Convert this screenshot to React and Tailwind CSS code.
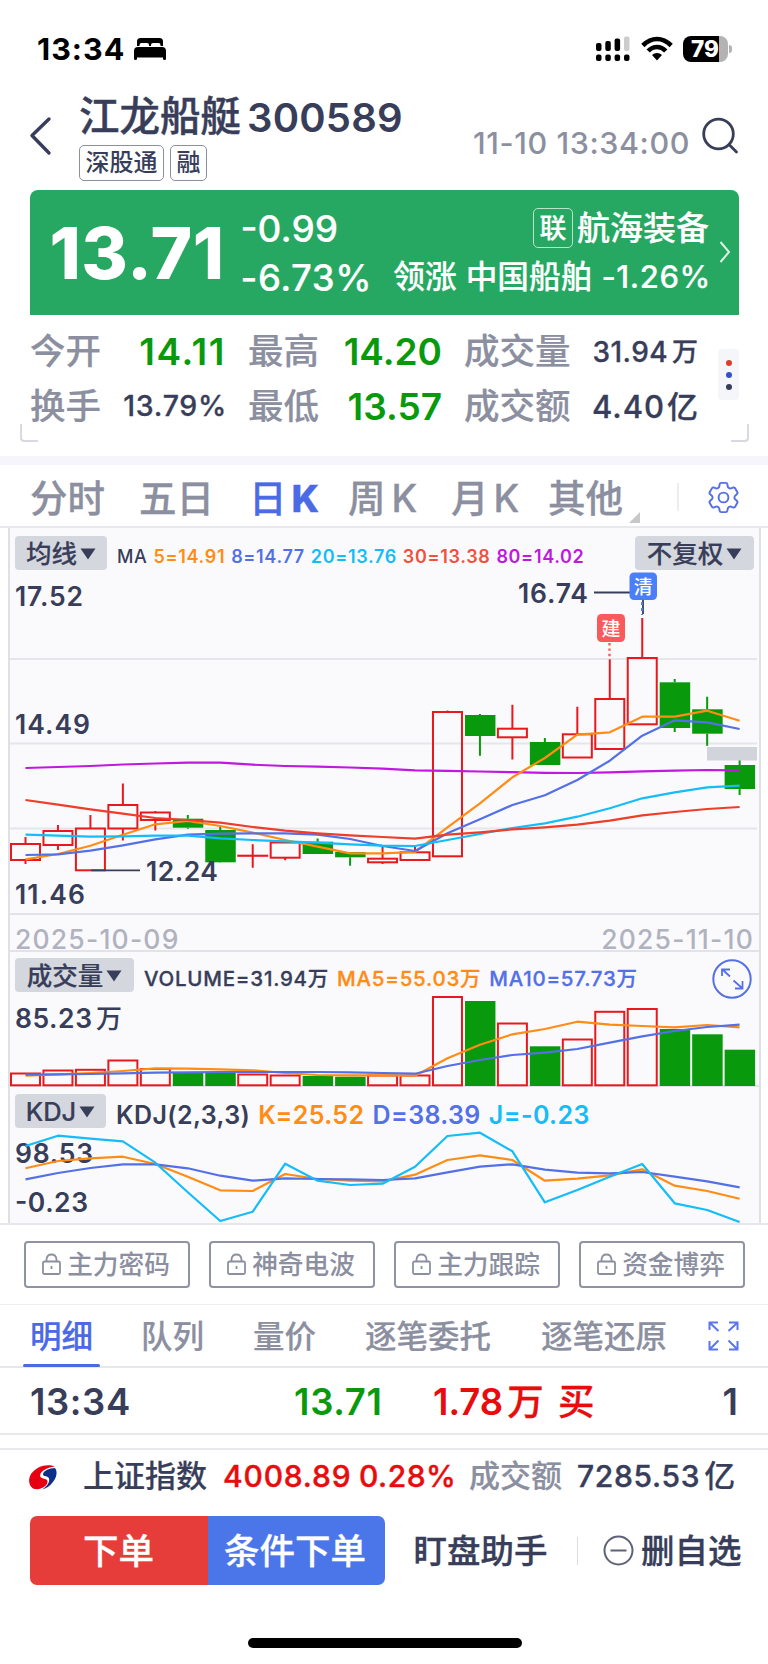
import { HiOutlineCog6Tooth } from 'react-icons/hi2';

const RED = '#e9181c';
const GREEN = '#089a0c';
const ORANGE = '#ff8c14';
const BLUE = '#5470e6';
const CYAN = '#14bdf7';
const INK = '#383e59';

const FIRST_X = 25.5;
const STEP = 32.46;
const cx = (i) => FIRST_X + i * STEP;

// open/close edges and wick edges, in panel pixels
const candles = [
  { up: true, top: 844, bottom: 860, high: 837, low: 864 },
  { up: true, top: 831, bottom: 845, high: 825, low: 850 },
  { up: true, top: 828.5, bottom: 870.3, high: 815, low: 870 },
  { up: true, top: 805, bottom: 828.5, high: 783.5, low: 840.5 },
  { up: true, top: 812.5, bottom: 820, high: 811, low: 830.5 },
  { up: false, top: 818.7, bottom: 827.7, high: 815, low: 828.7 },
  { up: false, top: 830, bottom: 862.3, high: 827, low: 862 },
  { up: true, top: 855.7, bottom: 855.8, high: 844.3, low: 867.7 },
  { up: true, top: 842.5, bottom: 857.7, high: 842, low: 860.3 },
  { up: false, top: 841.7, bottom: 854, high: 838.5, low: 854 },
  { up: false, top: 852, bottom: 857.3, high: 852, low: 865.7 },
  { up: true, top: 858.7, bottom: 862.3, high: 846.7, low: 864 },
  { up: true, top: 852.3, bottom: 860, high: 846.7, low: 860 },
  { up: true, top: 712, bottom: 856.3, high: 710.5, low: 856 },
  { up: false, top: 715, bottom: 736, high: 714, low: 755.7 },
  { up: true, top: 728.7, bottom: 737.3, high: 704.7, low: 759.5 },
  { up: false, top: 742, bottom: 765, high: 738, low: 765 },
  { up: true, top: 734.3, bottom: 757.5, high: 706.7, low: 757 },
  { up: true, top: 699, bottom: 749, high: 659.3, low: 749 },
  { up: true, top: 658, bottom: 724.3, high: 618, low: 724 },
  { up: false, top: 682.3, bottom: 728, high: 679, low: 732 },
  { up: false, top: 709.3, bottom: 733.7, high: 696.7, low: 745.7 },
  { up: false, top: 765, bottom: 789, high: 759.3, low: 795 },
];

const priceLines = [
  {
    color: '#c018de',
    values: [768, 767, 766, 764.5, 763.5, 762.7, 762.7, 764.7, 766, 766.7, 767.5, 768.7, 770.3, 770.8, 771.5, 772.2, 772.9, 773, 772.3, 771.3, 770.7, 770, 770.3],
  },
  {
    color: ORANGE,
    values: [859.3, 854, 845.7, 834.7, 824.3, 821, 826, 832.7, 840, 846.7, 853.3, 853.3, 852, 827.3, 803.3, 777.3, 758, 734.7, 732.3, 716.7, 716.7, 710.7, 720.7],
  },
  {
    color: BLUE,
    values: [855, 854.3, 850.7, 845.3, 839.3, 834.7, 833.7, 833.3, 833.3, 834.7, 839, 846, 851, 833.3, 819.3, 805, 795.3, 780, 760.7, 735.7, 720.3, 722.3, 729],
  },
  {
    color: CYAN,
    values: [834.7, 835.7, 836.7, 836.3, 835.7, 835.7, 838.3, 840, 841.3, 842.7, 844.3, 845.7, 846, 840, 834, 828, 823.3, 816.7, 808.3, 798.3, 792.3, 787.3, 785.7],
  },
  {
    color: '#ee3d2a',
    values: [800, 804.7, 809.3, 813.7, 818, 820, 822.7, 827, 830.7, 833.3, 835.3, 837, 838.7, 834.7, 832.3, 829.3, 827.3, 824.7, 820.7, 815.3, 812, 809, 807],
  },
];

const volumes = [1073.5, 1070.5, 1069.8, 1060.5, 1069, 1073, 1073, 1074.5, 1075.5, 1076, 1076.7, 1075.5, 1075.5, 997, 1001, 1023.5, 1046.3, 1039.5, 1011.8, 1009, 1029, 1034.3, 1049.7];

const volumeLines = [
  {
    color: ORANGE,
    values: [1075.7, 1074.3, 1073, 1071, 1068.3, 1068.7, 1069.3, 1070.3, 1073, 1075, 1075.3, 1075.3, 1075.7, 1058.3, 1044.7, 1034.3, 1029, 1021.7, 1024.7, 1026, 1027.3, 1025, 1027.3],
  },
  {
    color: BLUE,
    values: [1074.7, 1074.3, 1074, 1073.3, 1072.7, 1072.3, 1072, 1072, 1072, 1072, 1072.3, 1073, 1073.7, 1066, 1060, 1055, 1052.7, 1049, 1042.7, 1036.3, 1031, 1027, 1024.7],
  },
];

const kdjLines = [
  {
    color: ORANGE,
    values: [1168.3, 1161, 1158.3, 1156.7, 1164, 1176.7, 1190.3, 1191, 1174, 1179, 1180.7, 1181.3, 1174.7, 1160, 1155.3, 1160, 1180.7, 1178.7, 1175.3, 1169.3, 1185.7, 1191, 1198.7],
  },
  {
    color: BLUE,
    values: [1179.3, 1173, 1168, 1164.3, 1164.3, 1168.3, 1175.7, 1180.7, 1178.3, 1179, 1179.3, 1180, 1178.3, 1172.3, 1166.7, 1164.3, 1169.7, 1172.7, 1173.3, 1172, 1176.7, 1181.3, 1187.3],
  },
  {
    color: CYAN,
    values: [1146, 1135.7, 1138.7, 1141.3, 1162.7, 1192.3, 1221, 1211.7, 1163.7, 1180.7, 1185, 1183.7, 1166.7, 1136, 1132.7, 1151.3, 1202.3, 1190, 1176.7, 1164, 1203.3, 1210, 1222],
  },
];

function Lines({ lines }) {
  return lines.map((line, n) => (
    <polyline
      key={n}
      fill="none"
      stroke={line.color}
      strokeWidth="2.2"
      strokeLinejoin="round"
      points={line.values.map((y, i) => `${cx(i)},${y}`).join(' ')}
    />
  ));
}

function Label({ x, y, w, children }) {
  return (
    <text x={x} y={y} fontSize="26.5" fill={INK} fontWeight="600" textLength={w}>
      {children}
    </text>
  );
}

function Dropdown({ className, children }) {
  return (
    <button className={`flex h-[34px] shrink-0 items-center justify-center gap-[3px] rounded bg-[#d5d7de] pt-[1px] text-[25.5px] leading-none font-medium [-webkit-text-stroke:0.2px] ${className}`}>
      {children}
      <svg width="16" height="12" viewBox="0 0 16 12" fill={INK}>
        <path d="M0.5 0.5h15L8 11.5z" />
      </svg>
    </button>
  );
}

function PricePanel() {
  return (
    <section className="relative h-[387px] border-b-2 border-[#e2e3e8] text-[#383e59]">
      <svg className="absolute top-0 -left-[10px]" width="768" height="387" viewBox="0 528 768 387">
        <path d="M10 659H757M10 743.5H757M10 828.5H757" stroke="#e5e6ea" strokeWidth="2" />
        {candles.map((c, i) => (
          <g key={i} stroke={c.up ? RED : GREEN} strokeWidth="2" fill={c.up ? 'none' : GREEN}>
            <path d={`M${cx(i)} ${c.high}V${c.top}M${cx(i)} ${c.bottom}V${c.low}`} />
            {c.up ? (
              <rect x={cx(i) - 14.5} y={c.top} width="29" height={c.bottom - c.top} />
            ) : (
              <rect x={cx(i) - 15} y={c.top} width="30.5" height={c.bottom - c.top} stroke="none" />
            )}
          </g>
        ))}
        <rect x="707" y="747" width="50" height="13.5" fill="#d2d4dc" />
        <Lines lines={priceLines} />
        <path d="M91 870.3H140M594 592.5H630M643 600V614" stroke={INK} strokeWidth="1.8" />
        <path d="M642 602V615" stroke="#4c7ff5" strokeWidth="2" strokeDasharray="3 3" />
        <path d="M609.5 643V659" stroke="#fb5a5c" strokeWidth="2.4" strokeDasharray="2.4 3" />
        <rect x="629.5" y="572.5" width="27.5" height="27.5" rx="4.5" fill="#4b7ff8" />
        <rect x="597" y="614" width="28" height="28" rx="4.5" fill="#fb5a5c" />
        <text x="643.3" y="593.5" fontSize="19" fontWeight="500" fill="#fff" textAnchor="middle">清</text>
        <text x="611" y="635.5" fontSize="19" fontWeight="500" fill="#fff" textAnchor="middle">建</text>
        <Label x={15} y={606} w={68}>17.52</Label>
        <Label x={15} y={734} w={75}>14.49</Label>
        <Label x={15} y={903.5} w={70}>11.46</Label>
        <Label x={146} y={880.5} w={72}>12.24</Label>
        <Label x={518} y={603} w={70}>16.74</Label>
      </svg>
      <div className="relative flex items-center pt-2 pl-[5px]">
        <Dropdown className="w-[92px]">均线</Dropdown>
        <div className="ml-[10px] flex gap-[6px] pt-[7px] text-[18px] leading-none font-semibold tracking-[0.65px]">
          <span className="font-medium">MA</span>
          <span className="text-[#ff8c14]">5=14.91</span>
          <span className="text-[#5470e6]">8=14.77</span>
          <span className="text-[#14bdf7]">20=13.76</span>
          <span className="text-[#f0503c]">30=13.38</span>
          <span className="text-[#c018de]">80=14.02</span>
        </div>
        <Dropdown className="mr-[5px] ml-auto w-[119px]">不复权</Dropdown>
      </div>
    </section>
  );
}

function VolumePanel() {
  return (
    <section className="relative h-[135px] border-b-2 border-[#e2e3e8] text-[#383e59]">
      <svg className="absolute top-0 -left-[10px]" width="768" height="135" viewBox="0 952 768 135">
        {volumes.map((top, i) =>
          candles[i].up ? (
            <rect key={i} x={cx(i) - 14.5} y={top} width="29" height={1085.3 - top} fill="none" stroke={RED} strokeWidth="2" />
          ) : (
            <rect key={i} x={cx(i) - 15} y={top} width="30.5" height={1086 - top} fill={GREEN} />
          )
        )}
        <Lines lines={volumeLines} />
        <Label x={15} y={1027.5} w={77}>85.23</Label>
        <text x="96" y="1027.5" fontSize="26" fill={INK} fontWeight="500">万</text>
      </svg>
      <div className="relative flex items-center pt-[6px] pl-[5px]">
        <Dropdown className="w-[119px]">成交量</Dropdown>
        <div className="ml-[10px] flex gap-[8px] pt-[8px] text-[20.5px] leading-none font-medium tracking-[0.75px] [-webkit-text-stroke:0.3px]">
          <span>VOLUME=31.94万</span>
          <span className="text-[#ff8c14]">MA5=55.03万</span>
          <span className="text-[#5470e6]">MA10=57.73万</span>
        </div>
      </div>
      <svg className="absolute top-[7px] right-[7px]" width="40" height="40" viewBox="0 0 40 40" fill="none" stroke={BLUE} strokeWidth="2">
        <circle cx="20" cy="20" r="18.7" />
        <path d="M10 17V10.5H18M11 11L18 17.5M30.5 22V29.5H23M29.5 28.5L21.5 21.5" strokeWidth="1.8" />
      </svg>
    </section>
  );
}

function KdjPanel() {
  return (
    <section className="relative h-[136px] text-[#383e59]">
      <svg className="absolute top-0 -left-[10px]" width="768" height="136" viewBox="0 1087 768 136">
        <Label x={15} y={1163} w={78}>98.53</Label>
        <Label x={15} y={1212} w={73}>-0.23</Label>
        <Lines lines={kdjLines} />
      </svg>
      <div className="relative flex items-center pt-[7px] pl-[5px]">
        <Dropdown className="w-[91px]">KDJ</Dropdown>
        <div className="ml-[10px] flex gap-[8px] pt-[8px] text-[25px] leading-none font-semibold tracking-[0.4px]">
          <span>KDJ(2,3,3)</span>
          <span className="text-[#ff8c14]">K=25.52</span>
          <span className="text-[#5470e6]">D=38.39</span>
          <span className="text-[#14bdf7]">J=-0.23</span>
        </div>
      </div>
    </section>
  );
}

function StatusBar() {
  return (
    <div className="flex h-[98px] items-center pr-[36px] pl-[37px] text-black">
      <span className="text-[30.5px] leading-none font-bold tracking-[1px]">13:34</span>
      <svg className="ml-[8px]" width="34" height="24" viewBox="0 0 34 24">
        <path d="M4 9V4.500Q4 1 7.500 1H26.500Q30 1 30 4.500V9H27.500V8Q27.500 6 25.500 6H20Q18 6 18 8V9H16V8Q16 6 14 6H8.500Q6.500 6 6.500 8V9Z" />
        <path d="M1 22V14Q1 10 5 10H29Q33 10 33 14V22Q33 23 31.500 23T30 22V20.500H4V22Q4 23 2.500 23T1 22Z" />
      </svg>
      <svg className="ml-auto" width="34" height="26" viewBox="0 0 34 26">
        <rect x="0" y="7" width="5.500" height="8" rx="2" />
        <rect x="9.300" y="5" width="5.500" height="10" rx="2" />
        <rect x="18.600" y="2.500" width="5.500" height="12.500" rx="2" />
        <rect x="28" y="0.500" width="5.500" height="14.500" rx="2" fill="#ccc" />
        <rect x="0" y="18.500" width="5.500" height="6.500" rx="2" />
        <rect x="9.300" y="18.500" width="5.500" height="6.500" rx="2" />
        <rect x="18.600" y="18.500" width="5.500" height="6.500" rx="2" />
        <rect x="28" y="18.500" width="5.500" height="6.500" rx="2" />
      </svg>
      <svg className="mb-[2px] ml-[11px]" width="32" height="25" viewBox="0 0 32 25" fill="none" stroke="#000" strokeWidth="4.600">
        <path d="M1.800 9.500Q8.500 3 16 3T30.200 9.500" />
        <path d="M7.200 15Q11 11 16 11T24.800 15" />
        <path d="M16 24.500L11 19Q13 17 16 17T21 19Z" fill="#000" stroke="none" />
      </svg>
      <div className="relative ml-[10px] flex h-[26px] w-[45px] items-center justify-center overflow-hidden rounded-[8px] bg-linear-to-r from-black from-80% to-[#b3b3b3] to-80% pr-[1px] text-[22.500px] leading-none font-extrabold text-white">
        79
      </div>
      <div className="ml-[1px] h-[8px] w-[3px] rounded-r-full bg-[#b3b3b3]" />
    </div>
  );
}

function Header() {
  return (
    <header className="flex h-[92px] pl-[28px]">
      <svg className="mt-[18px]" width="24" height="40" viewBox="0 0 24 40" fill="none" stroke={INK} strokeWidth="3.400" strokeLinecap="round" strokeLinejoin="round">
        <path d="M21 3L4 19.500L21 37" />
      </svg>
      <div className="ml-[27px]">
        <h1 className="flex h-[38px] items-center gap-[6px] pt-[1px] text-[40px] leading-none font-semibold tracking-[0.200px] whitespace-nowrap">
          <span className="text-[40.500px] font-medium tracking-normal [-webkit-text-stroke:0.400px]">江龙船艇</span>
          <span>300589</span>
        </h1>
        <div className="mt-[9px] flex gap-[6px] text-[24px] leading-none font-medium">
          <span className="flex h-9 w-[85px] items-center justify-center rounded-[5px] border-[1.500px] border-[#8b8fa3]">深股通</span>
          <span className="flex h-9 w-[37px] items-center justify-center rounded-[5px] border-[1.500px] border-[#8b8fa3]">融</span>
        </div>
      </div>
      <span className="mt-[30px] ml-auto text-[30.500px] leading-none font-medium tracking-[0.600px] text-[#8b8fa0]">11-10 13:34:00</span>
      <svg className="mt-[19px] mr-[27px] ml-[11px]" width="40" height="40" viewBox="0 0 40 40" fill="none" stroke={INK} strokeWidth="2.800" strokeLinecap="round">
        <circle cx="17.500" cy="17" r="14.800" />
        <path d="M28 27.500L35.500 35" />
      </svg>
    </header>
  );
}

function Quote() {
  return (
    <section className="mr-[29px] ml-[29.500px] flex h-[125px] rounded-t-lg bg-[#27a862] text-white">
      <span className="mt-[28px] ml-[20px] w-[191px] text-[71px] leading-none font-extrabold tracking-[0.500px]">13.71</span>
      <div className="flex flex-col pt-[20px] text-[37px] leading-none font-medium [-webkit-text-stroke:0.200px]">
        <span>-0.99</span>
        <span className="mt-[13px] text-[36.500px] tracking-[0.500px]">-6.73%</span>
      </div>
      <div className="ml-auto flex flex-col items-end [-webkit-text-stroke:0.200px]">
        <div className="mt-[18px] flex h-10 items-center gap-1 text-[33px] leading-none font-medium">
          <span className="flex h-10 w-[40px] items-center justify-center rounded-[5px] border-[1.500px] border-[#b9e3cb] text-[27px]">联</span>
          <span>航海装备</span>
        </div>
        <div className="-mr-[2px] mt-[13px] flex items-center gap-[9px] text-[31.700px] leading-none font-medium">
          <span>领涨</span>
          <span>中国船舶</span>
          <span className="text-[31px] tracking-[0.600px]">-1.26%</span>
        </div>
      </div>
      <svg className="mt-[50px] mr-[8px] ml-[10px]" width="12" height="24" viewBox="0 0 12 24" fill="none" stroke="#d9f2e4" strokeWidth="2">
        <path d="M1.500 2L10 12L1.500 22" />
      </svg>
    </section>
  );
}

function Stats() {
  const label = 'text-[35.500px] text-[#8b8fa0] [-webkit-text-stroke:0.200px]';
  const price = 'pr-[22px] text-right text-[37px] font-semibold text-[#089a0c]';
  return (
    <section className="relative h-[141px] pt-[9px] leading-none font-medium">
      <div className="grid grid-cols-[70px_148px_70px_146px_105px_129px] grid-rows-[55px_55px] items-center pl-[30px] whitespace-nowrap">
        <span className={label}>今开</span>
        <span className={`${price} tracking-[1.600px]`}>14.11</span>
        <span className={label}>最高</span>
        <span className={price}>14.20</span>
        <span className={label}>成交量</span>
        <span className="flex items-center justify-end gap-[4px] text-[28px] tracking-[0.400px] [-webkit-text-stroke:0.300px]">
          31.94<span className="text-[26px] tracking-normal">万</span>
        </span>
        <span className={label}>换手</span>
        <span className="pr-[21px] text-right text-[28.500px] tracking-[0.700px] [-webkit-text-stroke:0.300px]">13.79%</span>
        <span className={label}>最低</span>
        <span className={price}>13.57</span>
        <span className={label}>成交额</span>
        <span className="flex items-center justify-end gap-[2px] text-[31px] tracking-[1px] [-webkit-text-stroke:0.300px]">
          4.40<span className="text-[31px] tracking-normal">亿</span>
        </span>
      </div>
      <div className="absolute top-[34px] right-[29px] flex h-[51px] w-[21px] flex-col items-center justify-center gap-[6px] rounded bg-[#f5f6f9]">
        <i className="size-[6px] rounded-full bg-[#d8402c]" />
        <i className="size-[6px] rounded-full bg-[#3550c8]" />
        <i className="size-[6px] rounded-full bg-[#383e59]" />
      </div>
      <i className="absolute top-[109px] left-[20px] h-[18px] w-[18px] rounded-bl-sm border-b-2 border-l-2 border-[#d8d9e1]" />
      <i className="absolute top-[109px] right-[19px] h-[18px] w-[18px] rounded-br-sm border-r-2 border-b-2 border-[#d8d9e1]" />
    </section>
  );
}

function PeriodTabs() {
  return (
    <nav className="relative flex h-[63px] items-center border-b-2 border-[#e8e8ed] pt-[6px] pl-[30px] text-[37.500px] leading-none font-medium whitespace-nowrap text-[#8b8fa0] [-webkit-text-stroke:0.300px]">
      <span className="w-[109px]">分时</span>
      <span className="w-[110px]">五日</span>
      <span className="w-[99px] text-[#4b6ae6]">日<b className="ml-[5px] font-extrabold">K</b></span>
      <span className="w-[103px]">周<span className="ml-[6px]">K</span></span>
      <span className="w-[97px]">月<span className="ml-[5px]">K</span></span>
      <span>其他</span>
      <svg className="mt-[37px] ml-[6px]" width="11" height="11" viewBox="0 0 11 11" fill="#c8c8ca">
        <path d="M11 0V11H0z" />
      </svg>
      <i className="absolute top-[18px] left-[677px] h-[28px] w-[1.500px] bg-[#ececf2]" />
      <HiOutlineCog6Tooth className="mr-[25px] mb-[3px] ml-auto size-[39px] stroke-[1.200] text-[#5470e6]" />
    </nav>
  );
}

function LockButtons() {
  return (
    <div className="flex h-[80px] justify-between border-b border-[#eeeff3] pt-[16px] pr-[23px] pl-[24px]">
      {['主力密码', '神奇电波', '主力跟踪', '资金博弈'].map((name) => (
        <button
          key={name}
          className="flex h-[47px] w-[166px] items-center justify-center gap-[6px] rounded-[4px] border-2 border-[#8f93a3] pr-[2px] text-[25.700px] leading-none font-medium text-[#8b8fa0]"
        >
          <svg width="19" height="23" viewBox="0 0 19 23" fill="none" stroke="#8b8fa0" strokeWidth="1.800">
            <rect x="1" y="8.500" width="17" height="12.500" rx="1.500" />
            <path d="M4.500 8.500V6.500Q5 1.500 9.500 1.500T14.500 6.500V8.500M9.500 13V16" />
          </svg>
          {name}
        </button>
      ))}
    </div>
  );
}

function DetailTabs() {
  return (
    <nav className="flex h-[63px] items-center border-b-2 border-[#e6e7ec] pl-[23px] text-[31.500px] leading-none font-medium whitespace-nowrap text-[#8b8fa0] [-webkit-text-stroke:0.200px]">
      <span className="relative flex h-full w-[77px] items-center justify-center pt-[2px] text-[#4b6ae6]">
        明细
        <i className="absolute -bottom-px left-0 h-[3.500px] w-full rounded-full bg-[#4b6ae6]" />
      </span>
      <span className="ml-[41px] w-[112px] pt-[2px]">队列</span>
      <span className="w-[112px] pt-[2px]">量价</span>
      <span className="w-[176px] pt-[2px]">逐笔委托</span>
      <span className="pt-[2px]">逐笔还原</span>
      <svg className="mr-[29px] ml-auto" width="31" height="30" viewBox="0 0 31 30" fill="none" stroke="#5a78ea" strokeWidth="2">
        <path d="M1.500 9V1.500H10M2 2L10.500 10M21 1.500H29.500V9M29 2L20.500 10M1.500 20V28.500H10M2 28L10.500 19.500M29.500 20V28.500H21M29 28L20.500 19.500" />
      </svg>
    </nav>
  );
}

function TradeRow() {
  return (
    <div className="grid h-[67px] grid-cols-[264px_139px_125px_1fr_auto] items-center border-b-2 border-[#e8e9ed] pt-[3px] pr-[30px] pl-[30px] text-[36.500px] leading-none font-semibold whitespace-nowrap">
      <span className="tracking-[0.600px]">13:34</span>
      <span className="tracking-[0.700px] text-[#089a0c]">13.71</span>
      <span className="flex items-center gap-[4px] text-[#e80c0c]">
        1.78<span className="font-medium [-webkit-text-stroke:0.300px]">万</span>
      </span>
      <span className="font-medium text-[#e80c0c] [-webkit-text-stroke:0.300px]">买</span>
      <span>1</span>
    </div>
  );
}

function IndexRow() {
  return (
    <div className="flex h-[55px] items-center pb-[4px] pl-[28px] text-[31px] leading-none font-medium whitespace-nowrap [-webkit-text-stroke:0.200px]">
      <svg className="mt-[4px]" width="30" height="27" viewBox="0 0 30 27">
        <path d="M27 2.500C19-1 8 2.500 3 10C-0.500 16 1 23.500 7 25C13 26 19.500 22 19.500 17.500C19.500 14 14.500 15.500 12.500 13C10.500 9 17 3.500 27 2.500Z" fill="#e60012" />
        <path d="M27 4C30 8 28.500 14 24.500 18.500C22 22 18 24.500 14 25.500C19.500 22 22 18 21 14.500C20 11.500 15.500 13 15 10.500C15 7 21 4 27 4Z" fill="#0b2f8a" />
      </svg>
      <span className="ml-[25px] w-[140px]">上证指数</span>
      <span className="w-[136px] text-[30px] tracking-[0.800px] text-[#e80c0c] [-webkit-text-stroke:0.400px]">4008.89</span>
      <span className="w-[110px] text-[30px] tracking-[0.500px] text-[#e80c0c] [-webkit-text-stroke:0.400px]">0.28%</span>
      <span className="w-[108px] text-[#8b8fa0]">成交额</span>
      <span className="flex items-center gap-[4px] text-[30px] tracking-[0.700px] [-webkit-text-stroke:0.400px]">
        7285.53<span className="text-[31px] [-webkit-text-stroke:0.200px]">亿</span>
      </span>
    </div>
  );
}

function BottomBar() {
  return (
    <div className="mt-[11px] flex h-[69px] items-center pl-[29.500px] text-[33.500px] leading-none font-medium whitespace-nowrap [-webkit-text-stroke:0.300px]">
      <button className="h-full w-[178px] rounded-l-[7px] bg-[#e63c3a] pt-[2px] text-center text-[35.500px] text-white">下单</button>
      <button className="h-full w-[177px] rounded-r-[7px] bg-[#4b76e9] pt-[2px] pr-[2px] text-center text-[35.500px] text-white">条件下单</button>
      <span className="ml-[29px] pt-[2px]">盯盘助手</span>
      <i className="ml-[29px] h-[28px] w-[1.500px] bg-[#dcdde4]" />
      <svg className="ml-[25px]" width="31" height="31" viewBox="0 0 31 31" fill="none" stroke="#5d6278" strokeWidth="2">
        <circle cx="15.500" cy="15.500" r="14" />
        <path d="M7.500 15.500H23.500" />
      </svg>
      <span className="ml-[7px] pt-[2px]">删自选</span>
    </div>
  );
}

export default function App() {
  return (
    <div className="h-[1664px] w-[768px] overflow-hidden bg-white font-['Inter','Noto_Sans_CJK_SC',sans-serif] text-[#383e59]">
      <StatusBar />
      <Header />
      <Quote />
      <Stats />
      <div className="h-[9px] bg-[#f5f5fb]" />
      <PeriodTabs />

      <main className="mr-[7px] ml-[8px] h-[695px] border-x-2 border-[#dfe0e6] bg-[#fafafd]">
        <PricePanel />
        <div className="flex h-[37px] items-center justify-between border-b-2 border-[#e2e3e8] px-[5px] pt-[13px] text-[26.500px] leading-none font-medium tracking-[1.200px] text-[#b0b2bf]">
          <span>2025-10-09</span>
          <span>2025-11-10</span>
        </div>
        <VolumePanel />
        <KdjPanel />
      </main>
      <div className="h-[2px] bg-[#e6e7ec]" />

      <LockButtons />
      <DetailTabs />
      <TradeRow />
      <div className="h-[15px] border-b-2 border-[#e8e9ed]" />
      <IndexRow />
      <BottomBar />
      <div className="mt-[53px] ml-[248px] h-[10px] w-[274px] rounded-full bg-black" />
    </div>
  );
}
